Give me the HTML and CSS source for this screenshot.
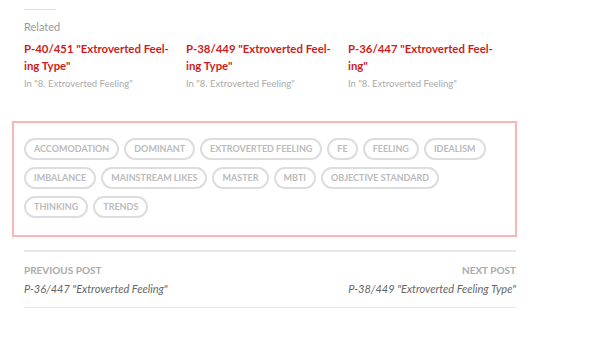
FILE: index.html
```html
<!DOCTYPE html>
<html lang="en">
  <head>
    <meta charset="UTF-8" />
    <title>Related posts</title>
    <link rel="stylesheet" href="styles.css">
  </head>
  <body>
    <div class="post-footer">
      <div class="related">
        <hr class="related-rule">
        <h3 class="related-title">Related</h3>
        <div class="related-list">
          <div class="related-item">
            <a class="related-link" href="#">P-40/451 "Extroverted Feel&shy;ing Type"</a>
            <div class="related-cat">In "8. Extroverted Feeling"</div>
          </div>
          <div class="related-item">
            <a class="related-link" href="#">P-38/449 "Extroverted Feel&shy;ing Type"</a>
            <div class="related-cat">In "8. Extroverted Feeling"</div>
          </div>
          <div class="related-item">
            <a class="related-link" href="#">P-36/447 "Extroverted Feel&shy;ing"</a>
            <div class="related-cat">In "8. Extroverted Feeling"</div>
          </div>
        </div>
      </div>

      <div class="tags">
        <a class="tag" href="#">Accomodation</a>
        <a class="tag" href="#">Dominant</a>
        <a class="tag" href="#">Extroverted Feeling</a>
        <a class="tag" href="#">Fe</a>
        <a class="tag" href="#">Feeling</a>
        <a class="tag" href="#">Idealism</a>
        <a class="tag" href="#">Imbalance</a>
        <a class="tag" href="#">Mainstream Likes</a>
        <a class="tag" href="#">Master</a>
        <a class="tag" href="#">MBTI</a>
        <a class="tag" href="#">Objective Standard</a>
        <a class="tag" href="#">Thinking</a>
        <a class="tag" href="#">Trends</a>
      </div>

      <nav class="post-nav">
        <div class="nav-prev">
          <span class="nav-label">Previous Post</span>
          <a class="nav-title" href="#">P-36/447 "Extroverted Feeling"</a>
        </div>
        <div class="nav-next">
          <span class="nav-label">Next Post</span>
          <a class="nav-title" href="#">P-38/449 "Extroverted Feeling Type"</a>
        </div>
      </nav>
    </div>
  </body>
</html>
```

FILE: styles.css
```css
body {
  margin: 0;
  background: #fff;
  font-family: Lato, "Liberation Sans", sans-serif;
}
a {
  text-decoration: none;
}
.post-footer {
  width: 492px;
  padding: 0 0 0 24px;
}
.related-rule {
  width: 32px;
  margin: 9px 0 0;
  border: 0;
  border-top: 1px solid #ddd;
}
.related-title {
  margin: 10px 0 0;
  font-size: 11px;
  font-weight: normal;
  color: #999;
  line-height: 14px;
}
.related-list {
  display: flex;
  gap: 7px;
  margin-top: 6px;
}
.related-item {
  width: 155px;
}
.related-link {
  display: block;
  font-size: 11.4px;
  font-weight: bold;
  line-height: 17px;
  color: #cc1d1d;
  hyphens: auto;
}
.related-cat {
  margin-top: 3px;
  font-size: 9.5px;
  line-height: 14px;
  color: #aaa;
}
.tags {
  display: flex;
  flex-wrap: wrap;
  gap: 7px 5px;
  margin: 30px 0 0 -12px;
  padding: 15px 14px 17px 10px;
  border: 2px solid #ffb3b3;
  width: 477px;
}
.tag {
  display: block;
  height: 18px;
  line-height: 18px;
  padding: 0 8px;
  border: 2px solid #ddd;
  border-radius: 12px;
  font-size: 9px;
  font-weight: bold;
  text-transform: uppercase;
  color: #bbb;
}
.post-nav {
  display: flex;
  justify-content: space-between;
  margin-top: 13px;
  padding: 11px 0 10px;
  border-top: 2px solid #e6e8e8;
  border-bottom: 1px solid #e6e8e8;
}
.nav-next {
  text-align: right;
}
.nav-label {
  display: block;
  font-size: 10px;
  font-weight: bold;
  text-transform: uppercase;
  color: #aaa;
  line-height: 14px;
}
.nav-title {
  display: block;
  margin-top: 4px;
  font-size: 11px;
  font-style: italic;
  color: #666;
  line-height: 16px;
}
```
